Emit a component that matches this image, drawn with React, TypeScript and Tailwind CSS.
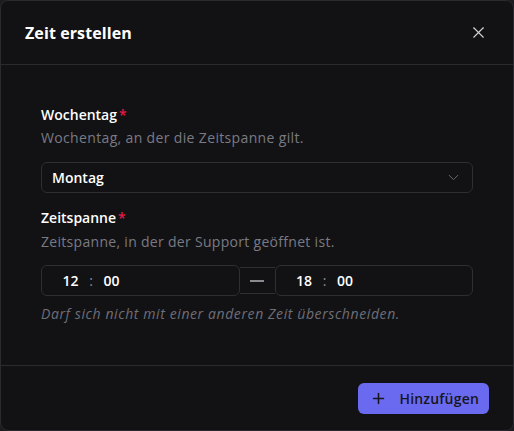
import { X, ChevronDown, Plus } from 'lucide-react';

// ─── Time field ─────────────────────────────────────────────────────────────

function TimeField({ hours, minutes }: { hours: string; minutes: string }) {
    return (
        <div className="flex-1 h-[31px] flex items-center pl-[20px] border border-[#2e2e33] rounded-md text-[14px] font-semibold text-white">
            <span className="w-[17px] text-center">{hours}</span>
            <span className="w-[24px] text-center text-[#8a8a93] font-normal">:</span>
            <span className="w-[17px] text-center">{minutes}</span>
        </div>
    );
}

// ─── Main ───────────────────────────────────────────────────────────────────

export default function App() {
    return (
        <div
            className="w-[514px] h-[431px] bg-[#1c1c20]"
            style={{ fontFamily: '"Open Sans", "Noto Sans", sans-serif' }}
        >
            <div className="w-full h-full flex flex-col bg-[#121214] border border-[#2a2a2f] rounded-lg overflow-hidden">

                {/* Header */}
                <div className="h-[64px] flex-shrink-0 flex items-center justify-between pl-[24px] pr-[25px] border-b border-[#2a2a2f]">
                    <h1 className="text-[16px] font-bold text-white tracking-[0.1px]">Zeit erstellen</h1>
                    <button className="text-[#d4d4d8] -mt-[1px]" aria-label="Schließen">
                        <X size={19} strokeWidth={1.4} />
                    </button>
                </div>

                {/* Body */}
                <div className="flex-1 px-[40px] pt-[40px]">
                    <label className="block text-[14px] leading-[20px] font-semibold text-white">
                        Wochentag<span className="text-[#e11d48] ml-[2px]">*</span>
                    </label>
                    <p className="mt-[3px] text-[14px] leading-[20px] tracking-[0.35px] text-[#7a7a85]">
                        Wochentag, an der die Zeitspanne gilt.
                    </p>
                    <div className="mt-[14px] h-[31px] flex items-center justify-between pl-[10px] pr-[10px] border border-[#2e2e33] rounded-md">
                        <span className="text-[14px] font-semibold text-white">Montag</span>
                        <ChevronDown size={17} strokeWidth={1.4} className="text-[#6b6b74]" />
                    </div>

                    <label className="block mt-[15px] text-[14px] leading-[20px] font-semibold text-white">
                        Zeitspanne<span className="text-[#e11d48] ml-[2px]">*</span>
                    </label>
                    <p className="mt-[4px] text-[14px] leading-[20px] tracking-[0.3px] text-[#7a7a85]">
                        Zeitspanne, in der der Support geöffnet ist.
                    </p>
                    <div className="mt-[13px] flex items-center">
                        <TimeField hours="12" minutes="00" />
                        <div className="w-[35px] h-[27px] flex items-center justify-center border-y border-[#2e2e33]">
                            <div className="w-[14px] h-[2px] bg-[#8a8a90]" />
                        </div>
                        <TimeField hours="18" minutes="00" />
                    </div>
                    <p className="mt-[8px] text-[14px] leading-[20px] italic tracking-[0.6px] text-[#6e6e78]">
                        Darf sich nicht mit einer anderen Zeit überschneiden.
                    </p>
                </div>

                {/* Footer */}
                <div className="h-[65px] flex-shrink-0 flex items-center justify-end pr-[24px] border-t border-[#2a2a2f]">
                    <button className="h-[31px] pl-[12px] pr-[10px] flex items-center gap-[12px] rounded-md bg-[#6a6af0] text-[#16161c] text-[14px] font-semibold tracking-[0.2px]">
                        <Plus size={17} strokeWidth={2.2} />
                        Hinzufügen
                    </button>
                </div>
            </div>
        </div>
    );
}
